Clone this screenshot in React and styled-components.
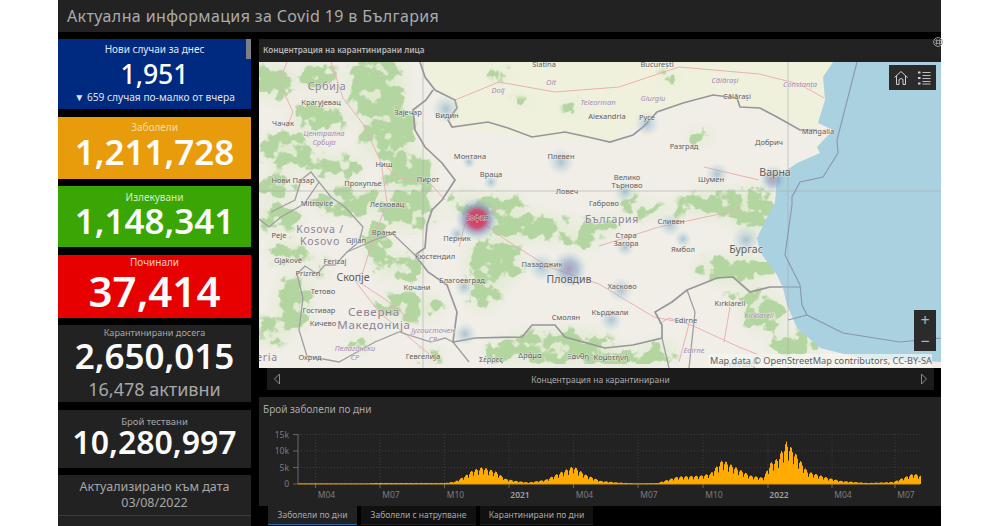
import styled, { createGlobalStyle } from "styled-components";

const GlobalStyle = createGlobalStyle`
  html, body { margin: 0; padding: 0; background: #fff; }
  body { font-family: "Noto Sans", "Open Sans", sans-serif; overflow: hidden; }
  * { box-sizing: border-box; }
`;

const cards = [
  { title: "Заболели", value: "1,211,728", bg: "#e89c0c", h: 62, tc: "#f6dca6", top: 4, fs: 35, lh: 36 },
  { title: "Излекувани", value: "1,148,341", bg: "#3aa605", h: 61, tc: "#d5efc6", top: 5, fs: 35, lh: 33 },
  { title: "Починали", value: "37,414", bg: "#e60000", h: 63, tc: "#f8cccc", top: 1, fs: 42, lh: 43 },
];

// [x, y, text, kind]
const labels = [
  [285, 2, "Slatina"], [398, 2, "București"], [68, 25, "Србија", "country"], [62, 40, "Крагујевац"],
  [24, 61, "Чачак"], [65, 71, "Централна", "region"], [65, 80, "Србија", "region"], [149, 50, "Зајечар"],
  [188, 53, "Видин"], [239, 28, "Dolj", "region"], [292, 20, "Olt", "region"], [339, 40, "Teleorman", "region"],
  [348, 54, "Alexandria"], [211, 94, "Монтана"], [302, 94, "Плевен"], [232, 112, "Враца"], [125, 102, "Ниш"],
  [169, 117, "Пирот"], [34, 118, "Нови Пазар"], [104, 121, "Прокупље"], [308, 129, "Ловеч"], [58, 141, "Mitrovicë"],
  [128, 142, "Лесковац"], [345, 141, "Габрово"], [466, 18, "Călărași", "region"], [541, 22, "Constanța", "region"],
  [394, 36, "Giurgiu", "region"], [478, 34, "Călărași"], [388, 55, "Русе"], [559, 69, "Mangalia"], [425, 84, "Разград"],
  [510, 80, "Добрич"], [368, 115, "Велико"], [368, 123, "Търново"], [452, 117, "Шумен"], [516, 111, "Варна", "city"],
  [218, 155, "София"], [198, 176, "Перник"], [353, 158, "България", "country"], [61, 168, "Kosova /", "country"],
  [61, 180, "Kosovo", "country"], [20, 173, "Peje"], [97, 178, "Gjilan"], [125, 170, "Врање"], [176, 194, "Кюстендил"],
  [29, 198, "Gjakovë"], [76, 199, "Ferizaj"], [49, 211, "Prizren"], [94, 216, "Скопје", "city"], [203, 218, "Благоевград"],
  [283, 202, "Пазарджик"], [310, 218, "Пловдив", "city"], [64, 229, "Тетово"], [158, 225, "Кочани"], [60, 248, "Гостивар"],
  [115, 251, "Северна", "big"], [115, 264, "Македонија", "big"], [64, 261, "Кичево"], [307, 255, "Смолян"],
  [351, 250, "Кърджали"], [174, 268, "Југоисточен", "region"], [174, 277, "СР", "region"], [96, 286, "Пелагонски", "region"],
  [96, 295, "СР", "region"], [164, 294, "Гевгелија"], [51, 295, "Охрид"], [8, 296, "eria", "country"], [232, 297, "Σέρρες"],
  [271, 293, "Δράμα"], [319, 294, "Ξάνθη"], [352, 295, "Κομοτηνή"], [412, 159, "Сливен"], [367, 173, "Стара"],
  [367, 181, "Загора"], [424, 187, "Ямбол"], [487, 188, "Бургас", "city"], [363, 224, "Хасково"], [471, 241, "Kırklareli"],
  [500, 253, "Kırklareli", "region"], [427, 258, "Edirne"], [435, 288, "Edirne", "region"], [481, 302, "Tekirdağ"],
];

// forest density [cx, cy, rx, ry]
const forest = [
  [118, 25, 28, 36], [128, 70, 26, 28], [60, 55, 26, 14], [28, 88, 26, 16], [75, 105, 28, 10], [15, 20, 20, 16],
  [60, 15, 20, 10], [18, 125, 18, 10], [150, 115, 22, 24], [90, 140, 36, 12], [18, 155, 22, 12], [150, 150, 26, 16],
  [118, 180, 12, 20], [28, 190, 18, 10], [150, 205, 16, 12], [35, 240, 16, 28], [130, 205, 14, 8], [150, 245, 32, 12],
  [205, 142, 18, 8], [240, 145, 26, 10], [270, 165, 44, 12], [320, 178, 16, 7], [235, 200, 28, 24], [225, 235, 14, 12],
  [300, 285, 56, 16], [250, 290, 26, 8], [360, 295, 36, 7], [400, 290, 16, 10], [395, 150, 26, 5], [455, 142, 34, 11],
  [492, 148, 22, 22], [475, 207, 40, 12], [505, 252, 22, 16], [535, 282, 24, 10], [488, 234, 20, 5], [10, 270, 18, 12],
  [170, 295, 14, 5], [240, 12, 12, 4], [262, 42, 10, 3], [312, 45, 6, 7], [440, 75, 12, 6], [370, 140, 12, 5],
  [340, 165, 18, 7], [410, 15, 10, 4], [60, 205, 10, 6], [100, 280, 12, 5],
];

const heat = [
  [218, 157, 22, "hot"], [187, 47, 15], [210, 100, 7], [302, 100, 14], [232, 120, 8], [388, 62, 13], [514, 117, 14, "warm"],
  [366, 130, 11], [411, 163, 12], [366, 185, 10], [487, 178, 15], [310, 207, 19, "warm"], [283, 205, 15], [362, 228, 13],
  [352, 258, 12], [205, 225, 10], [424, 177, 9], [206, 272, 12], [458, 112, 12], [198, 172, 9],
];

const bgBorder = "M174 28L167 38L154 48L156 68L166 85L183 101L196 118L183 138L173 148L168 163L166 186L156 193L169 210L188 223L198 250L194 280L216 276L263 275L273 263L296 263L306 275L346 286L374 283L403 276L403 263L396 250L413 240L428 228L458 216L474 215L491 230L511 225L523 225";
const danube = "M161 0L166 15L176 28L196 38L198 46L189 58L193 65L229 60L249 66L273 75L306 70L329 75L351 80L374 73L384 65L398 50L424 41L454 33L478 36L481 45L501 46L518 55L541 68L558 68";
const otherBorders = [
  "M0 157L10 165L22 155L45 142L60 120L52 110L42 118L36 138L12 150",
  "M60 120L72 135L86 145L104 165L100 180L88 190L76 203L66 203L58 212L46 204L38 212L44 236L40 268L48 294",
  "M88 190L120 176L134 172L156 193",
  "M48 294L80 300L116 280L140 270L172 280L186 276L194 280",
  "M194 280L210 300",
  "M403 276L410 306M428 228L436 250L430 306",
];
const sea = "M574 0L564 15L566 38L559 61L574 68L558 85L561 91L538 101L518 115L516 141L514 143L498 176L501 190L518 213L524 226L528 243L538 266L561 286L601 296L682 300L682 0Z";
const seaLines = "M598 0L578 78L579 91L564 115L541 120L533 135L533 143L526 193L541 223L543 243L548 253L584 271L641 280L682 276M523 225L541 225M529 258L548 253";
const roads = [
  "M28 0L20 20L34 50L28 65M72 0L84 36L104 62L122 100L140 116L170 120L186 138",
  "M122 100L128 140L110 190L104 210L94 216L130 240L150 256M94 216L120 250L170 292",
  "M196 38L240 20L296 30L360 25L420 5L500 12L540 22L565 36",
  "M200 185L206 162L218 157L250 180L290 205L340 222L395 255L430 262L480 285L530 305M218 157L240 145",
  "M340 184L400 165L470 150L480 145",
  "M445 105L500 118",
  "M400 262L410 256L430 262L420 300M471 245L465 280",
];

// chart envelope: [page x, height px]
const envelope = [
  [298, 0.5], [368, 0.5], [372, 1], [445, 1], [455, 2.5], [465, 8], [472, 13], [482, 16], [495, 12], [505, 5], [515, 3],
  [528, 1.5], [545, 4], [562, 12], [573, 17], [585, 9], [600, 3], [617, 1.5], [637, 0.5], [657, 1], [677, 7], [700, 8],
  [710, 10], [722, 23], [733, 17], [750, 8], [763, 6], [770, 20], [777, 24], [786, 40], [793, 32], [807, 12], [827, 6],
  [840, 3], [867, 1], [893, 2], [913, 10], [920, 8],
];

function heightAt(x) {
  for (let i = 1; i < envelope.length; i++) {
    const [x0, h0] = envelope[i - 1];
    const [x1, h1] = envelope[i];
    if (x <= x1) return h0 + ((h1 - h0) * (x - x0)) / (x1 - x0);
  }
  return 0;
}

// one pixel per column, dipping every 5 px for the weekend drop
const dips = [0.62, 0.9, 1.04, 1.06, 0.96];
const bars = [];
for (let x = 298; x < 921; x++) {
  bars.push([x - 298, heightAt(x) * dips[(x - 298) % 5]]);
}

const ticks = [315.5, 380, 444.5, 509, 573.5, 638, 703, 768, 832, 895];
const tickNames = ["M04", "M07", "M10", "2021", "M04", "M07", "M10", "2022", "M04", "M07"];

function MapDrawing() {
  return (
    <MapSvg viewBox="0 0 682 306">
      <defs>
        <filter id="woods" x="0" y="0" width="100%" height="100%" colorInterpolationFilters="sRGB">
          <feGaussianBlur in="SourceAlpha" stdDeviation="3.5" result="density" />
          <feTurbulence type="fractalNoise" baseFrequency="0.075" numOctaves="3" seed="11" result="noise" />
          <feColorMatrix in="noise" type="matrix" values="0 0 0 0 0  0 0 0 0 0  0 0 0 0 0  1.5 0 0 0 0" result="noiseAlpha" />
          <feComposite in="density" in2="noiseAlpha" operator="arithmetic" k1="0" k2="0.5" k3="1" k4="-1" result="mix" />
          <feComponentTransfer in="mix" result="mask">
            <feFuncA type="linear" slope="7" intercept="0" />
          </feComponentTransfer>
          <feFlood floodColor="#b3d5a0" />
          <feComposite in2="mask" operator="in" />
          <feGaussianBlur stdDeviation="0.6" />
        </filter>
        <filter id="tint"><feGaussianBlur stdDeviation="8" /></filter>
        <filter id="tiny"><feGaussianBlur stdDeviation="0.35" /></filter>
        <radialGradient id="cool">
          <stop offset="0%" stopColor="#7ba6c2" stopOpacity="0.6" />
          <stop offset="55%" stopColor="#9cc3cf" stopOpacity="0.3" />
          <stop offset="100%" stopColor="#b5d4d8" stopOpacity="0" />
        </radialGradient>
        <radialGradient id="warm">
          <stop offset="0%" stopColor="#a78bb0" stopOpacity="0.85" />
          <stop offset="45%" stopColor="#7f9fc4" stopOpacity="0.55" />
          <stop offset="100%" stopColor="#b5d4d8" stopOpacity="0" />
        </radialGradient>
        <radialGradient id="hot">
          <stop offset="0%" stopColor="#d92f55" />
          <stop offset="40%" stopColor="#c94a74" stopOpacity="0.95" />
          <stop offset="65%" stopColor="#7f92bd" stopOpacity="0.55" />
          <stop offset="100%" stopColor="#a9cfd8" stopOpacity="0" />
        </radialGradient>
      </defs>
      <rect width="682" height="306" fill="#f1eee8" />
      <path d="M161 0L176 28L198 46L193 65L273 75L351 80L398 50L454 33L518 55L558 68L574 0Z" fill="#eff1dc" />
      <g filter="url(#tint)" fill="#dfeacf">
        {forest.map(([cx, cy, rx, ry], i) => <ellipse key={i} cx={cx} cy={cy} rx={rx} ry={ry} />)}
      </g>
      <g filter="url(#woods)">
        {forest.map(([cx, cy, rx, ry], i) => <ellipse key={i} cx={cx} cy={cy} rx={rx} ry={ry} />)}
      </g>
      <path d={sea} fill="#a9d1df" />
      <g filter="url(#tiny)" fill="none">
        <path d="M0 129H682M164 0V306M529 0V306" stroke="#a8b0ac" strokeWidth="0.6" />
        {roads.map((d, i) => <path key={i} d={d} stroke="#eab0b4" strokeWidth="1" />)}
        {otherBorders.map((d, i) => <path key={i} d={d} stroke="#a09ea3" strokeWidth="1.3" />)}
        <path d={bgBorder} stroke="#98969a" strokeWidth="1.7" />
        <path d={danube} stroke="#98969a" strokeWidth="1.7" />
        <path d={seaLines} stroke="#8a97ad" strokeWidth="1.1" />
      </g>
      {heat.map(([cx, cy, r, kind], i) => (
        <circle key={i} cx={cx} cy={cy} r={r} fill={`url(#${kind || "cool"})`} />
      ))}
      {labels.map(([x, y, text, kind], i) => (
        <MapLabel key={i} x={x} y={y + 3} $kind={kind}>{text}</MapLabel>
      ))}
    </MapSvg>
  );
}

function DailyChart() {
  return (
    <ChartSvg viewBox="0 0 682 72">
      <g stroke="#3c3c3c" strokeWidth="1" strokeDasharray="1 2">
        <path d="M39 3.5H661M39 20H661M39 36.5H661" />
        {ticks.map((t) => <path key={t} d={`M${t - 259} 3V53`} />)}
      </g>
      <path d="M34 3.5H39M34 20H39M34 36.5H39M34 53H39M39 3V53" stroke="#666" strokeWidth="1" fill="none" />
      {ticks.map((t) => <path key={t} d={`M${t - 259} 53V57`} stroke="#666" />)}
      <g fill="#ffab00" transform="translate(39 0)">
        {bars.map(([x, h]) => <rect key={x} x={x} y={53 - h} width="1" height={h} />)}
      </g>
      <path d="M39 53H661" stroke="#d99a1c" strokeWidth="1.2" />
      {["15k", "10k", "5k", "0"].map((t, i) => (
        <AxisText key={t} x="30" y={6.5 + i * 16.5} textAnchor="end">{t}</AxisText>
      ))}
      {ticks.map((t, i) => (
        <AxisText key={i} x={t - 259 + 11} y="67" textAnchor="middle" $strong={tickNames[i].startsWith("20")}>{tickNames[i]}</AxisText>
      ))}
    </ChartSvg>
  );
}

function PagerArrow({ flip }) {
  return (
    <ArrowSvg $flip={flip} viewBox="0 0 8 12" fill="none" stroke="#8a8a8a">
      <path d="M6.5 1L1.5 6L6.5 11Z" />
    </ArrowSvg>
  );
}

export default function App() {
  return (
    <Page>
      <GlobalStyle />
      <Dashboard>
        <Header>Актуална информация за Covid 19 в България</Header>
        <Body>
          <Side>
            <Card $bg="#002a7f" $h={70}>
              <CardTitle $color="#e3e8f4" $top={4}>Нови случаи за днес</CardTitle>
              <TodayValue>1,951</TodayValue>
              <TodayNote>▼ 659 случая по-малко от вчера</TodayNote>
              <ScrollThumb />
            </Card>
            {cards.map((c) => (
              <Card key={c.title} $bg={c.bg} $h={c.h}>
                <CardTitle $color={c.tc} $top={c.top}>{c.title}</CardTitle>
                <CardValue $fs={c.fs} $lh={c.lh}>{c.value}</CardValue>
              </Card>
            ))}
            <Card $bg="#222" $h={77}>
              <CardTitle $color="#a5a5a5" $top={1} $fs={9.1}>Карантинирани досега</CardTitle>
              <CardValue $fs={35} $lh={34}>2,650,015</CardValue>
              <CardSub>16,478 активни</CardSub>
            </Card>
            <Card $bg="#222" $h={58}>
              <CardTitle $color="#a5a5a5" $top={5} $fs={9.5}>Брой тествани</CardTitle>
              <CardValue $fs={32} $lh={27}>10,280,997</CardValue>
            </Card>
            <DateCard>
              <DateText>Актуализирано към дата</DateText>
              <DateText>03/08/2022</DateText>
            </DateCard>
            <SideTail />
          </Side>
          <Main>
            <MapPanel>
              <PanelHead>Концентрация на карантинирани лица</PanelHead>
              <MapArea>
                <MapDrawing />
                <MapTools>
                  <svg width="16" height="16" viewBox="0 0 16 16" fill="none" stroke="#cfcfcf" strokeWidth="1">
                    <path d="M1.5 7.5L8 1.5L14.5 7.5M3.5 6V14.5H6V9.5Q8 7.5 10 9.5V14.5H12.5V6" />
                  </svg>
                  <svg width="16" height="16" viewBox="0 0 16 16" fill="none" stroke="#cfcfcf">
                    <path d="M6.5 2.5H14.5M6.5 5.5H14.5M6.5 8.5H14.5M6.5 11.5H14.5M6.5 14H14.5" strokeWidth="0.9" />
                    <path d="M2 2.5H4.5M2 8H4.5M2 13.5H4.5" strokeWidth="2.2" />
                  </svg>
                </MapTools>
                <ZoomBox>
                  <span>+</span>
                  <span>−</span>
                </ZoomBox>
                <Attribution>Map data © OpenStreetMap contributors, CC-BY-SA</Attribution>
              </MapArea>
              <PanelDot>
                <svg width="10" height="10" viewBox="0 0 10 10" fill="none" stroke="#9a9a9a">
                  <circle cx="5" cy="5" r="4.4" />
                  <circle cx="3.6" cy="3.6" r="0.8" fill="#9a9a9a" />
                  <circle cx="3.6" cy="6.4" r="0.8" fill="#9a9a9a" />
                  <circle cx="6.6" cy="3.6" r="0.8" fill="#9a9a9a" />
                  <circle cx="6.6" cy="6.4" r="0.8" fill="#9a9a9a" />
                </svg>
              </PanelDot>
            </MapPanel>
            <Pager>
              <PagerArrow />
              <span>Концентрация на карантинирани</span>
              <PagerArrow flip />
            </Pager>
            <ChartPanel>
              <ChartTitle>Брой заболели по дни</ChartTitle>
              <DailyChart />
            </ChartPanel>
            <Tabs>
              <Tab $active>Заболели по дни</Tab>
              <Tab $w={115}>Заболели с натрупване</Tab>
              <Tab $w={113}>Карантинирани по дни</Tab>
            </Tabs>
          </Main>
        </Body>
      </Dashboard>
    </Page>
  );
}

const Page = styled.div`
  width: 1000px;
  height: 526px;
  background: #fff;
  padding-left: 58px;
  overflow: hidden;
`;
const Dashboard = styled.div`
  width: 883px;
  height: 526px;
  background: #000;
  display: flex;
  flex-direction: column;
`;
const Header = styled.header`
  height: 32px;
  flex: none;
  background: #222;
  color: #ababab;
  font-size: 16px;
  line-height: 32px;
  padding-left: 9px;
  letter-spacing: 0.37px;
`;
const Body = styled.div`
  display: flex;
  gap: 8px;
  padding-top: 7px;
  flex: 1;
  min-height: 0;
`;
const Side = styled.aside`
  width: 193px;
  flex: none;
  display: flex;
  flex-direction: column;
  gap: 7.5px;
`;
const Card = styled.section`
  position: relative;
  height: ${(p) => p.$h}px;
  flex: none;
  background: ${(p) => p.$bg};
  display: flex;
  flex-direction: column;
  align-items: center;
  color: #fff;
`;
const CardTitle = styled.div`
  font-size: ${(p) => p.$fs || 10}px;
  line-height: 13px;
  margin-top: ${(p) => p.$top}px;
  color: ${(p) => p.$color};
`;
const CardValue = styled.div`
  font-size: ${(p) => p.$fs}px;
  line-height: ${(p) => p.$lh}px;
  font-weight: 600;
  color: #fbfbfb;
  white-space: nowrap;
`;
const CardSub = styled.div`
  font-size: 18px;
  line-height: 20px;
  margin-top: 6px;
  color: #a8a8a8;
`;
const TodayValue = styled.div`
  font-size: 26.6px;
  line-height: 30px;
  margin-top: 3px;
  font-weight: 500;
`;
const TodayNote = styled.div`
  font-size: 10.2px;
  line-height: 14px;
  margin-top: 1px;
  color: #dfe4f0;
`;
const ScrollThumb = styled.div`
  position: absolute;
  top: 0;
  right: 0;
  width: 5px;
  height: 20px;
  background: #7d8088;
`;
const DateCard = styled.section`
  height: 41px;
  flex: none;
  background: #222;
  display: flex;
  flex-direction: column;
  align-items: center;
  justify-content: center;
  border-bottom: 1px solid #3a3a3a;
`;
const DateText = styled.div`
  font-size: 12.5px;
  line-height: 16px;
  color: #a6a6a6;
`;
const SideTail = styled.div`
  flex: 1;
  margin-top: -7.5px;
  background: #222;
`;
const Main = styled.main`
  flex: 1;
  min-width: 0;
  display: flex;
  flex-direction: column;
`;
const MapPanel = styled.section`
  position: relative;
  height: 329px;
  flex: none;
  display: flex;
  flex-direction: column;
`;
const PanelHead = styled.div`
  height: 23px;
  flex: none;
  background: #222;
  color: #b5b5b5;
  font-size: 8.2px;
  font-weight: 600;
  line-height: 22px;
  padding-left: 4px;
`;
const PanelDot = styled.div`
  position: absolute;
  top: -2px;
  right: -2px;
  display: flex;
`;
const MapArea = styled.div`
  position: relative;
  flex: 1;
  overflow: hidden;
`;
const MapSvg = styled.svg`
  display: block;
  width: 682px;
  height: 306px;
`;
const labelSize = { country: 10.5, city: 10.5, big: 11.5, region: 7.5 };
const MapLabel = styled.text`
  font-family: "Noto Sans", sans-serif;
  font-size: ${(p) => labelSize[p.$kind] || 7.5}px;
  font-style: ${(p) => (p.$kind === "region" ? "italic" : "normal")};
  letter-spacing: ${(p) => (p.$kind === "big" || p.$kind === "country" ? 0.7 : 0)}px;
  text-anchor: middle;
  fill: ${(p) =>
    p.$kind === "region" ? "#a58bb0" : p.$kind === "country" || p.$kind === "big" ? "#8d7f98" : "#5d5d5d"};
  stroke: #f3f1ec;
  stroke-width: 1.2px;
  stroke-opacity: 0.6;
  paint-order: stroke;
`;
const MapTools = styled.div`
  position: absolute;
  top: 3px;
  right: 5px;
  width: 47px;
  height: 25px;
  background: #2b2b2b;
  display: flex;
  align-items: center;
  justify-content: space-between;
  padding: 0 4px;
`;
const ZoomBox = styled.div`
  position: absolute;
  top: 248px;
  right: 5px;
  width: 22px;
  height: 41px;
  background: #2b2b2b;
  color: #b5b5b5;
  font-size: 16px;
  line-height: 20px;
  display: flex;
  flex-direction: column;
  align-items: center;
  justify-content: space-around;
`;
const Attribution = styled.div`
  position: absolute;
  right: 9px;
  bottom: 1px;
  padding: 0 0 0 2px;
  background: rgba(244, 244, 240, 0.75);
  color: #5a5f64;
  font-size: 9.2px;
  line-height: 13px;
  white-space: nowrap;
`;
const Pager = styled.nav`
  height: 22px;
  margin: 0 7px 7px 8px;
  flex: none;
  background: #1b1b1b;
  color: #a8a8a8;
  font-size: 8.5px;
  display: flex;
  align-items: center;
  justify-content: space-between;
  padding: 0 6px;
`;
const ArrowSvg = styled.svg`
  width: 8px;
  height: 12px;
  transform: ${(p) => (p.$flip ? "scaleX(-1)" : "none")};
`;
const ChartPanel = styled.section`
  height: 109px;
  flex: none;
  background: #222;
  display: flex;
  flex-direction: column;
`;
const ChartTitle = styled.div`
  font-size: 10px;
  line-height: 14px;
  padding: 5px 0 0 4px;
  height: 34px;
  color: #a8a8a8;
`;
const ChartSvg = styled.svg`
  display: block;
  width: 682px;
  height: 72px;
`;
const AxisText = styled.text`
  font-family: "Noto Sans", sans-serif;
  font-size: 8.5px;
  fill: ${(p) => (p.$strong ? "#a0a0a0" : "#7d7d7d")};
  font-weight: ${(p) => (p.$strong ? 600 : 400)};
`;
const Tabs = styled.div`
  display: flex;
  gap: 4px;
  padding-left: 9px;
  height: 20px;
  flex: none;
`;
const Tab = styled.div`
  width: ${(p) => p.$w || 89}px;
  height: 19px;
  background: ${(p) => (p.$active ? "#222" : "#111")};
  color: #a8a8a8;
  font-size: 8.5px;
  line-height: 17px;
  text-align: center;
  border-bottom: 1px solid ${(p) => (p.$active ? "#1f6fb0" : "#222")};
`;
